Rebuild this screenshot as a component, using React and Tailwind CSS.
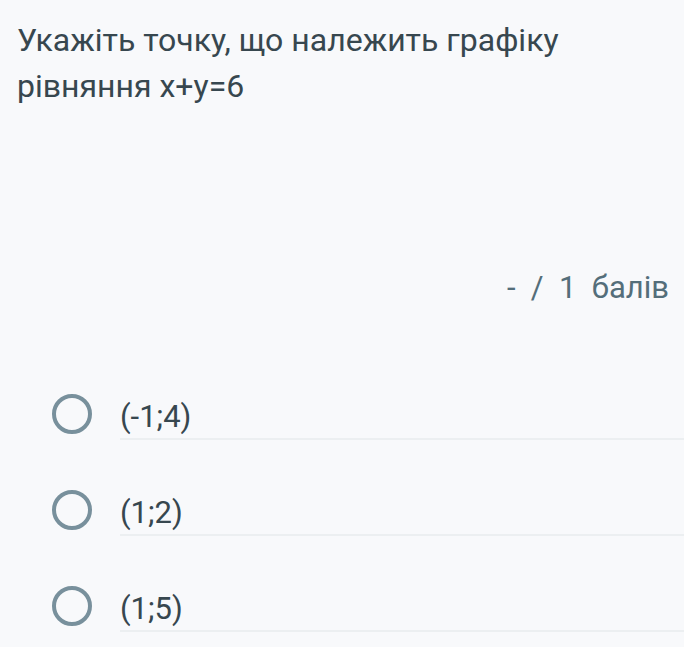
import React from "react";

const options = ["(-1;4)", "(1;2)", "(1;5)"];

const App = () => {
  return (
    <div className="w-[684px] h-[647px] overflow-hidden bg-[#f8f9fb] font-['Roboto',sans-serif] text-[#37474f]">
      {/* Question */}
      <div className="pl-[17px] pt-[17px] text-[32px] leading-[46px]">
        <p>Укажіть точку, що належить графіку</p>
        <p>рівняння x+y=6</p>
      </div>

      {/* Points */}
      <div className="flex justify-end pr-[15px] mt-[156px] text-[31px] leading-[46px] text-[#546e7a]">
        <span>-&nbsp;&nbsp;/&nbsp;&nbsp;1&nbsp;&nbsp;балів</span>
      </div>

      {/* Options */}
      <div className="mt-[33px]">
        {options.map((opt) => (
          <div key={opt} className="flex h-[96px]">
            <div className="w-[120px] pl-[52px] pb-[6px] flex items-end">
              <span className="w-[40px] h-[40px] rounded-full border-4 border-[#78909c]" />
            </div>
            <div className="flex-1 flex items-end border-b-2 border-[#eceff1] pb-[3px]">
              <span className="text-[31px] leading-[36px]">{opt}</span>
            </div>
          </div>
        ))}
      </div>
    </div>
  );
};

export default App;
